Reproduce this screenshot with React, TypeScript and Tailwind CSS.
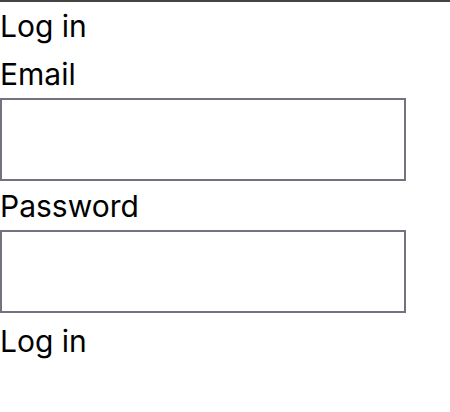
export default function App() {
  return (
    <div className="min-h-screen bg-white text-black" style={{ fontFamily: 'Inter, "Noto Sans", sans-serif' }}>
      <div className="h-[2px] w-full bg-[#444444]" />
      <h1 className="mt-[6px] text-[30px] leading-[36px] font-normal">Log in</h1>
      <form className="mt-[12px] flex flex-col items-start text-[30px] leading-[36px]">
        <label htmlFor="email">Email</label>
        <input
          id="email"
          type="email"
          className="mt-[6px] h-[83px] w-[406px] border-2 border-[#72737f] bg-white outline-none"
        />
        <label htmlFor="password" className="mt-[7px]">
          Password
        </label>
        <input
          id="password"
          type="password"
          className="mt-[6px] h-[83px] w-[406px] border-2 border-[#72737f] bg-white outline-none"
        />
        <button type="submit" className="mt-[10px] p-0 text-left">
          Log in
        </button>
      </form>
    </div>
  )
}
